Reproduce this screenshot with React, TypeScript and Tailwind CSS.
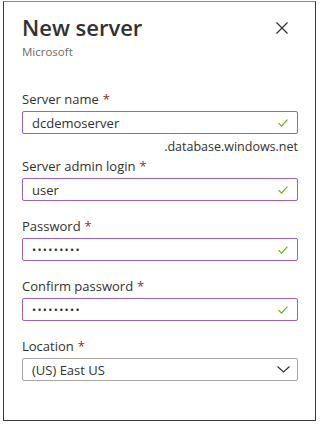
import React from "react";

const Req = () => <span className="text-[#a4262c] ml-[4px]">*</span>;

const Check = () => (
  <svg width="10" height="8" viewBox="0 0 10 8" fill="none">
    <path d="M0.6 4.2 L3.6 7.1 L9.4 0.7" stroke="#5db300" strokeWidth="1.1" />
  </svg>
);

function Field({ label, children, purple = true, trailing }: { label: string; children: React.ReactNode; purple?: boolean; trailing: React.ReactNode }) {
  return (
    <div className="flex flex-col">
      <div className="text-[13px] leading-[18px] text-[#323130]">
        {label}
        <Req />
      </div>
      <div
        className={
          purple
            ? "mt-[3px] h-[23px] border border-[#9c5fc8] rounded-[2px] flex items-center justify-between pl-[9px] pr-[9px]"
            : "mt-[3px] h-[23px] border border-[#a8a6a4] rounded-[2px] flex items-center justify-between pl-[9px] pr-[7px]"
        }
      >
        <div className="text-[13px] leading-[18px] text-[#323130]">{children}</div>
        {trailing}
      </div>
    </div>
  );
}

const Dots = () => (
  <span className="text-[11px] tracking-[1.3px] text-[#323130]">•••••••••</span>
);

export default function App() {
  return (
    <div className="w-[320px] h-[425px] bg-white font-['Open_Sans','Noto_Sans',sans-serif] pt-[1px]">
      <div className="ml-[3px] w-[313px] h-[420px] border-t border-t-[#6f8db0] border-l border-r border-b border-l-[#3a3a3a] border-r-[#3a3a3a] border-b-[#3a3a3a] pt-[11px] pl-[18px] pr-[17px]">
        <div className="flex items-start justify-between">
          <div className="flex flex-col">
            <div className="text-[22px] leading-[28px] font-semibold text-[#323130]">New server</div>
            <div className="mt-[3px] text-[11.5px] leading-[16px] text-[#6e6c6a]">Microsoft</div>
          </div>
          <svg className="mt-[9px] mr-[10px]" width="12" height="12" viewBox="0 0 12 12">
            <path d="M0.5 0.5 L11.5 11.5 M11.5 0.5 L0.5 11.5" stroke="#323130" strokeWidth="1.2" />
          </svg>
        </div>

        <div className="mt-[30px] flex flex-col">
          <Field label="Server name" trailing={<Check />}>dcdemoserver</Field>
          <div className="mt-[3px] text-right text-[12.5px] leading-[20px] text-[#323130]">.database.windows.net</div>
          <Field label="Server admin login" trailing={<Check />}>user</Field>
          <div className="mt-[16px]">
            <Field label="Password" trailing={<Check />}><Dots /></Field>
          </div>
          <div className="mt-[16px]">
            <Field label="Confirm password" trailing={<Check />}><Dots /></Field>
          </div>
          <div className="mt-[16px]">
            <Field
              label="Location"
              purple={false}
              trailing={
                <svg width="13" height="7" viewBox="0 0 13 7" fill="none">
                  <path d="M0.5 0.5 L6.5 6 L12.5 0.5" stroke="#323130" strokeWidth="1.1" />
                </svg>
              }
            >
              (US) East US
            </Field>
          </div>
        </div>
      </div>
    </div>
  );
}
